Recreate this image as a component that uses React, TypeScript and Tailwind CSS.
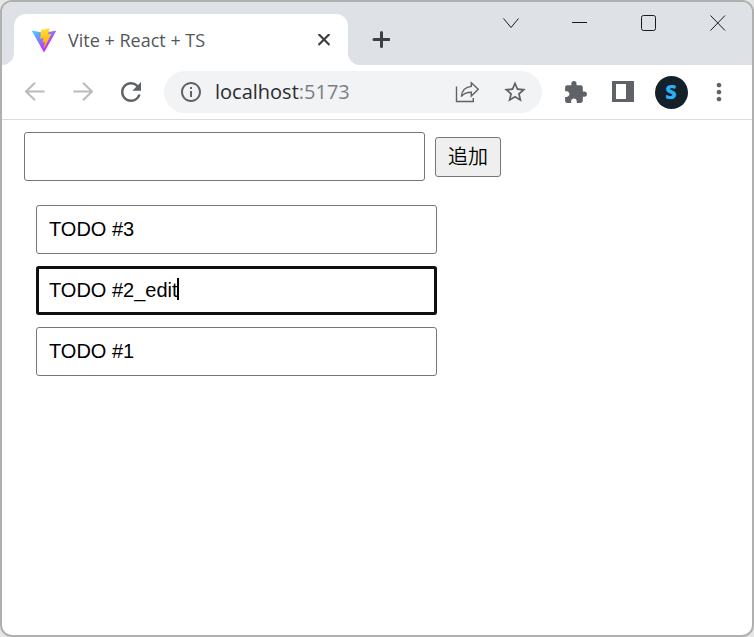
import React, { useState } from 'react';
import { MdExtension, MdInfoOutline, MdMoreVert, MdRefresh, MdStarBorder } from 'react-icons/md';

type Todo = {
  id: number;
  value: string;
};

const ViteLogo = () => (
  <svg width="24" height="24" viewBox="0 0 256 257" aria-hidden="true">
    <defs>
      <linearGradient id="viteBody" x1="-.8%" x2="57.6%" y1="7.7%" y2="78.4%">
        <stop offset="0%" stopColor="#41D1FF" />
        <stop offset="100%" stopColor="#BD34FE" />
      </linearGradient>
      <linearGradient id="viteBolt" x1="43.4%" x2="50.3%" y1="2.2%" y2="89%">
        <stop offset="0%" stopColor="#FFEA83" />
        <stop offset="8.3%" stopColor="#FFDD35" />
        <stop offset="100%" stopColor="#FFA800" />
      </linearGradient>
    </defs>
    <path fill="url(#viteBody)" d="M255.153 37.938L134.897 252.976c-2.483 4.44-8.862 4.466-11.382.048L.875 37.958c-2.746-4.814 1.371-10.646 6.827-9.67l120.385 21.517a6.537 6.537 0 0 0 2.322-.004l117.867-21.483c5.438-.991 9.574 4.796 6.877 9.62Z" />
    <path fill="url(#viteBolt)" d="M185.432.063L96.44 17.501a3.268 3.268 0 0 0-2.634 3.014l-5.474 92.456a3.268 3.268 0 0 0 3.997 3.378l24.777-5.718c2.318-.535 4.413 1.507 3.936 3.838l-7.361 36.047c-.495 2.426 1.782 4.5 4.151 3.78l15.304-4.649c2.372-.72 4.652 1.36 4.15 3.788l-11.698 56.621c-.732 3.542 3.979 5.473 5.943 2.437l1.313-2.028l72.516-144.72c1.215-2.423-.88-5.186-3.54-4.672l-25.505 4.922c-2.396.462-4.435-1.77-3.759-4.114l16.646-57.705c.677-2.35-1.37-4.583-3.769-4.113Z" />
  </svg>
);

const ArrowIcon = ({ forward = false }: { forward?: boolean }) => (
  <svg width="20" height="20" viewBox="0 0 20 20" fill="none" stroke="#b9bbbe" strokeWidth="2" aria-hidden="true">
    <path d={forward ? 'M0.5 9.5H18.5M10 0.7L19 9.5L10 18.3' : 'M19.5 9.5H1.5M10 0.7L1 9.5L10 18.3'} />
  </svg>
);

const ShareIcon = () => (
  <svg width="24" height="24" viewBox="0 0 24 24" fill="none" stroke="#5f6368" strokeWidth="1.4" aria-hidden="true">
    <path d="M1.5 6.5V21.5H18.3V18" />
    <path d="M16.3 2.8L23.2 9.3L16.3 16V12.2C11.5 12.2 8.5 13.4 6.3 16.6C6.9 11 10 7 16.3 6.4Z" />
  </svg>
);

const SidePanelIcon = () => (
  <svg width="22" height="22" viewBox="0 0 22 22" aria-hidden="true">
    <path fill="#5f6368" fillRule="evenodd" d="M0 0H22V21H0ZM4 3V18H14V3Z" />
  </svg>
);

const windowControls = [
  { label: 'Search tabs', d: 'M0.5 3.5L8 12.5L15.5 3.5' },
  { label: 'Minimize', d: 'M0 7.5H15' },
  { label: 'Maximize', d: 'M2.5 0.5H12.5Q14.5 0.5 14.5 2.5V13.5Q14.5 15.5 12.5 15.5H2.5Q0.5 15.5 0.5 13.5V2.5Q0.5 0.5 2.5 0.5Z' },
  { label: 'Close', d: 'M0.5 0.5L15 15.5M15 0.5L0.5 15.5' },
];

const TabStrip = () => (
  <header className="flex justify-between bg-[#dee1e6]">
    <div className="flex items-end pt-3">
      <span className="h-3 w-3 bg-white">
        <span className="block h-full rounded-br-full bg-[#dee1e6]" />
      </span>
      <div className="flex h-[51px] w-[334px] items-center gap-3 rounded-t-xl bg-white pr-3 pl-[18px]">
        <ViteLogo />
        <span className="flex-1 truncate text-lg leading-6 text-[#53575b]">Vite + React + TS</span>
        <button aria-label="Close tab" className="flex h-6 w-6 items-center justify-center">
          <svg width="12" height="12" viewBox="0 0 12 12" stroke="#3c4043" strokeWidth="2.2" aria-hidden="true">
            <path d="M0.5 0L11.5 11M11.5 0L0.5 11" />
          </svg>
        </button>
      </div>
      <span className="h-3 w-3 bg-white">
        <span className="block h-full rounded-bl-full bg-[#dee1e6]" />
      </span>
      <button aria-label="New tab" className="flex h-[51px] w-[42px] items-center justify-center">
        <svg width="18" height="18" viewBox="0 0 18 18" stroke="#3c4043" strokeWidth="3" strokeLinecap="round" aria-hidden="true">
          <path d="M9.5 1.5V15.5M2 8.5H17" />
        </svg>
      </button>
    </div>
    <div className="flex">
      {windowControls.map(control => (
        <button key={control.label} aria-label={control.label} className="flex h-[42px] w-[69px] items-center justify-center">
          <svg width="16" height="16" viewBox="0 0 16 16" fill="none" stroke="#1a1a1a" aria-hidden="true">
            <path d={control.d} />
          </svg>
        </button>
      ))}
    </div>
  </header>
);

const Toolbar = () => (
  <nav className="flex items-center gap-[9px] border-b border-[#dadce0] px-[9px] py-1.5 text-[#5f6368]">
    <div className="flex">
      <button aria-label="Back" className="flex h-[42px] w-12 items-center justify-center"><ArrowIcon /></button>
      <button aria-label="Forward" className="flex h-[42px] w-12 items-center justify-center"><ArrowIcon forward /></button>
      <button aria-label="Reload" className="flex h-[42px] w-12 items-center justify-center"><MdRefresh size={30} /></button>
    </div>
    <div className="flex h-[42px] min-w-0 flex-1 items-center rounded-full bg-[#f1f3f4] pr-[3px] pl-[15px]">
      <button aria-label="View site information" className="mr-3"><MdInfoOutline size={24} /></button>
      <div className="flex-1 truncate text-xl text-[#7b7f83]">
        <span className="text-[#2a2c30]">localhost</span>:5173
      </div>
      <button aria-label="Share this page" className="flex w-12 justify-center"><ShareIcon /></button>
      <button aria-label="Bookmark this tab" className="flex w-12 justify-center"><MdStarBorder size={26} /></button>
    </div>
    <div className="flex">
      <button aria-label="Extensions" className="flex h-[42px] w-12 items-center justify-center"><MdExtension size={25} /></button>
      <button aria-label="Side panel" className="flex h-[42px] w-12 items-center justify-center"><SidePanelIcon /></button>
      <button aria-label="Profile" className="flex h-[42px] w-12 items-center justify-center">
        <span className="flex h-[33px] w-[33px] items-center justify-center rounded-full bg-[#14202a] text-xl leading-6 font-black text-[#29b0f8]">S</span>
      </button>
      <button aria-label="Menu" className="flex h-[42px] w-12 items-center justify-center"><MdMoreVert size={28} /></button>
    </div>
  </nav>
);

const fieldClass = 'block h-[49px] w-[401px] max-w-full rounded-[3px] border border-[#767676] bg-white px-3 text-xl text-black';

export default function App() {
  const [text, setText] = useState('');
  const [editingId, setEditingId] = useState<number | null>(2);
  const [todos, setTodos] = useState<Todo[]>([
    { id: 3, value: 'TODO #3' },
    { id: 2, value: 'TODO #2_edit' },
    { id: 1, value: 'TODO #1' },
  ]);

  const handleSubmit = (e: React.FormEvent) => {
    e.preventDefault();
    if (!text) return;
    setTodos([{ id: todos.length + 1, value: text }, ...todos]);
    setText('');
  };

  const handleEdit = (id: number, value: string) => {
    setTodos(todos.map(todo => (todo.id === id ? { ...todo, value } : todo)));
  };

  return (
    <div className="min-h-screen bg-[#e6e6e6] font-['Open_Sans','Noto_Sans_CJK_JP',sans-serif]">
      <div className="min-h-screen overflow-hidden rounded-xl border-2 border-[#b0b0b0] bg-white">
        <TabStrip />
        <Toolbar />
        <main className="px-[22px] py-3 font-['Liberation_Sans','Noto_Sans_CJK_JP',sans-serif]">
          <form onSubmit={handleSubmit} className="flex items-center gap-2.5">
            <input aria-label="新しいTODO" type="text" value={text} onChange={e => setText(e.target.value)} className={fieldClass} />
            <button type="submit" className="h-10 shrink-0 rounded-[3px] border border-[#767676] bg-[#efefef] px-3 text-xl leading-6 font-[350] text-black">
              追加
            </button>
          </form>
          <ul className="flex flex-col gap-3 px-3 py-6">
            {todos.map(todo => (
              <li key={todo.id} className="relative">
                <input
                  aria-label={`TODO ${todo.id}`}
                  type="text"
                  value={todo.value}
                  onFocus={() => setEditingId(null)}
                  onChange={e => handleEdit(todo.id, e.target.value)}
                  className={`${fieldClass} ${todo.id === editingId ? 'outline-3 -outline-offset-3 outline-[#101010]' : ''}`}
                />
                {todo.id === editingId && <span className="absolute top-3 left-[141px] h-[22px] w-0.5 bg-black" />}
              </li>
            ))}
          </ul>
        </main>
      </div>
    </div>
  );
}
